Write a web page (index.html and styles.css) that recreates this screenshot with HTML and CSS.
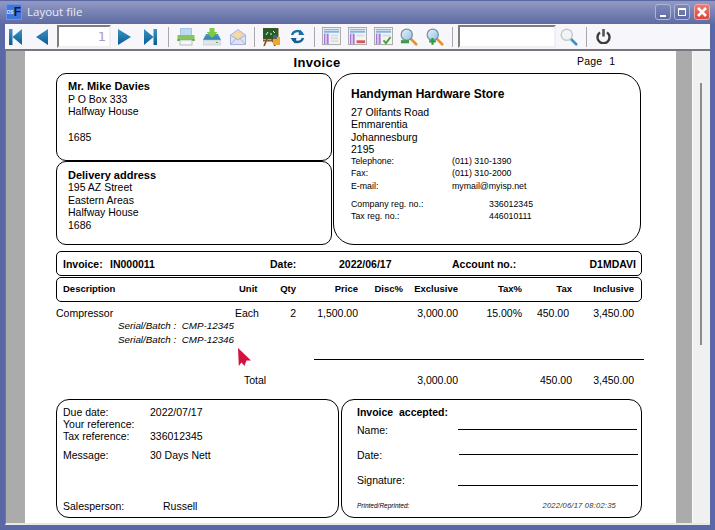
FILE: index.html
```html
<!DOCTYPE html>
<html lang="en">
<head>
<meta charset="utf-8">
<title>Layout file</title>
<link rel="stylesheet" href="styles.css">
</head>
<body>
<svg class="defs" width="0" height="0" aria-hidden="true">
  <defs>
    <linearGradient id="nav" x1="0" y1="0" x2="0" y2="1"><stop offset="0" stop-color="#3b94c6"/><stop offset="1" stop-color="#0a5c92"/></linearGradient>
    <linearGradient id="lens" x1="0" y1="0" x2="1" y2="1"><stop offset="0" stop-color="#e9f3fb"/><stop offset="1" stop-color="#8fc0e6"/></linearGradient>
    <linearGradient id="tray" x1="0" y1="0" x2="0" y2="1"><stop offset="0" stop-color="#4d9cc8"/><stop offset="1" stop-color="#1f6f9e"/></linearGradient>
    <symbol id="report" viewBox="0 0 20 20">
      <rect x="0.5" y="0.5" width="19" height="18" fill="#f3f3f3" stroke="#a9a9a9"/>
      <rect x="2" y="2" width="16" height="4" fill="#7db6e0"/>
      <rect x="2" y="3" width="16" height="1" fill="#d8e8f5"/>
      <rect x="2" y="7" width="5" height="11" fill="#a878d8"/>
      <rect x="3.5" y="7" width="1.5" height="11" fill="#e8dcf6"/>
    </symbol>
    <symbol id="lens-base" viewBox="0 0 20 20">
      <path d="M11 11 L18 18" stroke="#e8912d" stroke-width="3" stroke-linecap="round"/>
      <circle cx="7.5" cy="7.5" r="6.2" fill="url(#lens)" stroke="#7c8d9c" stroke-width="1.4"/>
    </symbol>
  </defs>
</svg>

<div class="window">
  <header class="titlebar">
    <div class="appicon"><span class="appicon-os">OS</span><span class="appicon-f">F</span></div>
    <div class="title">Layout file</div>
    <div class="winbtns">
      <div class="winbtn"><span class="glyph-min"></span></div>
      <div class="winbtn"><span class="glyph-max"></span></div>
      <div class="winbtn winbtn-close">
        <svg width="12" height="12" viewBox="0 0 12 12"><path d="M2 2 L10 10 M10 2 L2 10" stroke="#fff" stroke-width="2.6"/></svg>
      </div>
    </div>
  </header>

  <nav class="toolbar">
    <div class="tool"><svg width="14" height="16" viewBox="0 0 14 16"><rect x="0" y="0" width="3.5" height="16" fill="url(#nav)"/><path d="M13 0 V16 L3.5 8 Z" fill="url(#nav)"/></svg></div>
    <div class="tool"><svg width="12" height="16" viewBox="0 0 12 16"><path d="M12 0 V16 L0 8 Z" fill="url(#nav)"/></svg></div>
    <div class="numbox page-num">1</div>
    <div class="tool"><svg width="13" height="16" viewBox="0 0 13 16"><path d="M0 0 V16 L13 8 Z" fill="url(#nav)"/></svg></div>
    <div class="tool"><svg width="14" height="16" viewBox="0 0 14 16"><rect x="10.5" y="0" width="3.5" height="16" fill="url(#nav)"/><path d="M1 0 V16 L10.5 8 Z" fill="url(#nav)"/></svg></div>
    <div class="sep sep-a"></div>
    <div class="tool"><svg width="18" height="18" viewBox="0 0 18 18"><rect x="3.5" y="0.5" width="11" height="7" fill="#bcd9ef" stroke="#a5c6de"/><rect x="0.5" y="7" width="17" height="6" fill="#86c65a"/><rect x="0.5" y="11" width="17" height="2" fill="#5aa73a"/><rect x="3" y="12" width="12" height="5" fill="#f4f6f7" stroke="#b7bfc4"/></svg></div>
    <div class="tool"><svg width="18" height="18" viewBox="0 0 18 18"><path d="M3 6 H15 L18 12 V16 H0 V12 Z" fill="url(#tray)"/><rect x="0" y="12" width="18" height="5" fill="#dfe5e8" stroke="#b7c0c5" stroke-width="0.6"/><rect x="13" y="14" width="2" height="1" fill="#5aa73a"/><path d="M6.5 0 H11.5 V4 H14.5 L9 10 L3.5 4 H6.5 Z" fill="#7ecb3f"/></svg></div>
    <div class="tool"><svg width="16" height="16" viewBox="0 0 16 16"><path d="M0.5 6 L8 0.5 L15.5 6 V15.5 H0.5 Z" fill="#dce3f6" stroke="#a7b3dd"/><path d="M3 7 L5 3 H11 L13 7 L8 10 Z" fill="#f7d9a5" stroke="#e8c48a" stroke-width="0.6"/><path d="M0.5 15.5 L6.5 9 M15.5 15.5 L9.5 9 M0.5 6 L8 11 L15.5 6" fill="none" stroke="#a7b3dd"/></svg></div>
    <div class="sep sep-b"></div>
    <div class="tool"><svg width="17" height="18" viewBox="0 0 17 18"><rect x="0" y="0" width="15" height="11" fill="#1f5f2a" stroke="#6b4a1f" stroke-width="1"/><path d="M3 7 L5 4 M7 6 H9 M10 3 L12 5" stroke="#e8f3e0" stroke-width="1"/><path d="M4 11 L1 18 M9 11 L12 18" stroke="#7a4d18" stroke-width="1.6"/><rect x="0" y="12" width="10" height="1.5" fill="#8a5a20"/><rect x="10" y="9" width="7" height="8" fill="#f0a52c"/><rect x="10" y="7" width="4" height="4" fill="#55606a"/></svg></div>
    <div class="tool"><svg width="15" height="15" viewBox="0 0 15 15"><path d="M2 6 A5.6 5.6 0 0 1 12 4.5" fill="none" stroke="#1a6fa3" stroke-width="2.4"/><path d="M10 0.5 L14.5 6 L8.5 6 Z" fill="#1a6fa3"/><path d="M13 9 A5.6 5.6 0 0 1 3 10.5" fill="none" stroke="#155f8e" stroke-width="2.4"/><path d="M5 14.5 L0.5 9 L6.5 9 Z" fill="#155f8e"/></svg></div>
    <div class="sep"></div>
    <div class="tool"><svg class="ico19" viewBox="0 0 20 20"><use href="#report"/><rect x="9" y="8" width="8" height="2" fill="#d9dde0"/><rect x="9" y="11" width="8" height="2" fill="#d9dde0"/><rect x="9" y="14" width="8" height="2" fill="#d9dde0"/></svg></div>
    <div class="tool"><svg class="ico19" viewBox="0 0 20 20"><use href="#report"/><rect x="9" y="8" width="8" height="2" fill="#d9dde0"/><rect x="9" y="14" width="9" height="3" fill="#d8595c"/></svg></div>
    <div class="tool"><svg class="ico19" viewBox="0 0 20 20"><use href="#report"/><rect x="9" y="8" width="8" height="2" fill="#d9dde0"/><path d="M10 14 L12.5 17 L17.5 10.5" fill="none" stroke="#4f9f3a" stroke-width="2"/></svg></div>
    <div class="tool"><svg width="18" height="18" viewBox="0 0 20 20"><use href="#lens-base"/><rect x="1" y="13.5" width="9" height="3.5" fill="#3f9a4a"/></svg></div>
    <div class="tool"><svg width="18" height="18" viewBox="0 0 20 20"><use href="#lens-base"/><path d="M6 11 H8.5 V13.5 H11 V16 H8.5 V18.5 H6 V16 H3.5 V13.5 H6 Z" fill="#2f9a3f"/></svg></div>
    <div class="sep sep-a2"></div>
    <div class="numbox search-box"></div>
    <div class="tool"><svg width="18" height="18" viewBox="0 0 20 20"><path d="M11 11 L18 18" stroke="#3f8fc0" stroke-width="3" stroke-linecap="round"/><circle cx="7.5" cy="7.5" r="6.2" fill="#f1f3f5" stroke="#c4cace" stroke-width="1.6"/></svg></div>
    <div class="sep"></div>
    <div class="tool"><svg width="15" height="15" viewBox="0 0 15 15"><path d="M4 3.4 A6 6 0 1 0 11 3.4" fill="none" stroke="#3c3c3c" stroke-width="2.4"/><rect x="6.2" y="0" width="2.6" height="7.5" fill="#555"/></svg></div>
  </nav>

  <main class="viewer">
    <div class="gutter gutter-left"></div>
    <article class="page">
      <div class="doc-head">
        <h1 class="doc-title">Invoice</h1>
        <div class="doc-page"><span>Page</span><span>1</span></div>
      </div>

      <section class="top-grid">
        <div class="box box-bill">
          <div class="strong">Mr. Mike Davies</div>
          <div>P O Box 333</div>
          <div>Halfway House</div>
          <div>&nbsp;</div>
          <div>1685</div>
        </div>
        <div class="box box-store">
          <div class="store-name">Handyman Hardware Store</div>
          <div>27 Olifants Road</div>
          <div>Emmarentia</div>
          <div>Johannesburg</div>
          <div>2195</div>
          <div class="store-contact">
            <span>Telephone:</span><span>(011) 310-1390</span>
            <span>Fax:</span><span>(011) 310-2000</span>
            <span>E-mail:</span><span>mymail@myisp.net</span>
          </div>
          <div class="store-reg">
            <span>Company reg. no.:</span><span>336012345</span>
            <span>Tax reg. no.:</span><span>446010111</span>
          </div>
        </div>
        <div class="box box-delivery">
          <div class="strong">Delivery address</div>
          <div>195 AZ Street</div>
          <div>Eastern Areas</div>
          <div>Halfway House</div>
          <div>1686</div>
        </div>
      </section>

      <section class="box box-info">
        <span class="i-label">Invoice:</span><span class="i-num">IN000011</span>
        <span class="i-date">Date:</span><span class="i-dateval">2022/06/17</span>
        <span class="i-acc">Account no.:</span><span class="i-accval">D1MDAVI</span>
      </section>

      <section class="box box-cols cols">
        <span>Description</span><span class="pad-unit">Unit</span><span class="r">Qty</span><span class="r">Price</span><span class="r">Disc%</span><span class="r">Exclusive</span><span class="r">Tax%</span><span class="r">Tax</span><span class="r">Inclusive</span>
      </section>

      <section class="line-items">
        <div class="cols cols-flush">
          <span>Compressor</span><span class="pad-each">Each</span><span class="r">2</span><span class="r">1,500.00</span><span class="r"></span><span class="r">3,000.00</span><span class="r">15.00%</span><span class="r val-tax">450.00</span><span class="r">3,450.00</span>
        </div>
        <div class="serial">Serial/Batch :&nbsp; CMP-12345</div>
        <div class="serial serial-2">Serial/Batch :&nbsp; CMP-12346</div>
        <div class="total-rule"></div>
        <div class="cols cols-flush">
          <span></span><span class="pad-total">Total</span><span class="r"></span><span class="r"></span><span class="r"></span><span class="r">3,000.00</span><span class="r"></span><span class="r">450.00</span><span class="r">3,450.00</span>
        </div>
      </section>

      <section class="bottom-grid">
        <div class="box box-terms">
          <div class="terms">
            <span>Due date:</span><span>2022/07/17</span>
            <span>Your reference:</span><span></span>
            <span>Tax reference:</span><span>336012345</span>
            <span class="gap-msg">Message:</span><span class="gap-msg">30 Days Nett</span>
          </div>
          <div class="sales"><span>Salesperson:</span><span>Russell</span></div>
        </div>
        <div class="box box-accept">
          <div class="strong accept-title">Invoice&nbsp; accepted:</div>
          <div class="sign sign-name"><span>Name:</span><i class="sign-rule"></i></div>
          <div class="sign sign-date"><span>Date:</span><i class="sign-rule"></i></div>
          <div class="sign sign-sig"><span>Signature:</span><i class="sign-rule"></i></div>
          <div class="printed"><span class="printed-l">Printed/Reprinted:</span><span class="printed-r">2022/06/17 08:02:35</span></div>
        </div>
      </section>

      <svg class="cursor" width="14" height="19" viewBox="0 0 14 19"><path d="M0 0 L13 12.5 L8.5 12.5 L7.5 15 L6.5 18 L3.5 14.5 L0.8 18 Z" fill="#d4123f"/></svg>
    </article>
    <div class="gutter gutter-right"></div>
    <aside class="scroll"><div class="thumb"></div></aside>
  </main>
</div>
</body>
</html>
```
FILE: styles.css
```css
* { box-sizing: border-box; margin: 0; padding: 0; }
html, body { width: 715px; height: 530px; overflow: hidden; }
body { font-family: "Liberation Sans", Arial, sans-serif; font-size: 10.5px; color: #000; background: #5a69a5; }
.defs { position: absolute; }

.window { width: 715px; height: 530px; display: flex; flex-direction: column; padding: 0 5px 5px; background: #5a69a5; }

.titlebar { height: 24px; margin: 0 -5px; padding: 4px 5px 0 6px; display: flex; align-items: flex-start; background: linear-gradient(#8e96c1 2px, #7a84b5 10px, #5c68a1 24px); border-top: 1px solid #5a69a5; flex: none; }
.appicon { width: 16px; height: 16px; background: #3f76dc; border: 1px solid #6f93e0; display: flex; align-items: center; justify-content: flex-end; margin-top: -1px; overflow: hidden; }
.appicon-os { font-size: 5px; font-weight: bold; color: #dfe8ff; }
.appicon-f { font-size: 12px; font-weight: bold; color: #14143c; line-height: 14px; }
.title { margin-left: 5px; font-family: "Open Sans", sans-serif; font-size: 11.5px; line-height: 16px; color: #e8ebf7; margin-top: -1px; }
.winbtns { margin-left: auto; display: flex; gap: 3px; margin-top: -1px; }
.winbtn { width: 16px; height: 16px; border: 1px solid #aeb5d6; border-radius: 3px; background: linear-gradient(#7d87b8, #5f6ba6); display: flex; align-items: center; justify-content: center; position: relative; }
.winbtn:nth-child(2) { margin-right: 1px; }
.winbtn-close { background: linear-gradient(#ee7a6f, #e0443c); border-color: #f0a9a4; }
.glyph-min { width: 6px; height: 2px; background: #fff; margin-top: 8px; }
.glyph-max { width: 8px; height: 8px; border: 1.5px solid #fff; border-top-width: 2px; }

.toolbar { display: flex; align-items: center; background: #f7f7fb; border-bottom: 2px solid #77777b; flex: none; height: 27px; }
.tool { width: 26px; flex: none; display: flex; align-items: center; justify-content: center; height: 22px; }
.tool:first-child { margin-left: -2px; }
.ico19 { width: 19px; height: 19px; }
.sep { width: 1px; height: 20px; background: #a9a9ad; margin: 0 3px 0 4px; flex: none; }
.sep-a { margin: 0 4px 0 5px; }
.sep-a2 { margin: 0 5px 0 4px; }
.sep-b { margin: 0 3px; }
.numbox { height: 23px; background: #fff; border: 2px solid #f0f0f2; border-top-color: #7d7d80; border-left-color: #7d7d80; flex: none; }
.page-num { width: 54px; margin-left: 2px; text-align: right; color: #a99bd2; font-size: 13px; line-height: 19px; padding-right: 3px; font-family: "DejaVu Sans", sans-serif; }
.search-box { width: 98px; }

.viewer { flex: 1; min-height: 0; display: flex; border-bottom: 2px solid #e8e8ea; border-left: 1px solid #77777b; overflow: hidden; }
.gutter { background: #ababab; flex: none; }
.gutter-left { width: 19px; }
.gutter-right { width: 16px; }
.page { width: 651px; flex: none; background: #fff; padding-left: 31px; position: relative; overflow: hidden; }
.scroll { flex: 1; background: #f0f0f0; border-left: 1px solid #fafafa; padding: 32px 0 0 7px; }
.thumb { width: 2px; height: 262px; background: #8d8d8d; }

.doc-head { height: 22px; display: flex; }
.doc-title { width: 522px; text-align: center; font-size: 13px; font-weight: bold; letter-spacing: 0.3px; line-height: 24px; }
.doc-page { display: flex; gap: 7px; margin-left: -1px; line-height: 20px; letter-spacing: 0.2px; }

.box { border: 1px solid #000; }
.strong { font-weight: bold; font-size: 11px; }

.top-grid { display: grid; grid-template-columns: 276px 308px; grid-template-rows: 88px 84px; column-gap: 1px; }
.box-bill { padding: 6px 11px; border-radius: 10px; line-height: 12.7px; }
.box-delivery { padding: 7px 11px; border-radius: 10px; line-height: 12.4px; grid-column: 1; }
.box-store { grid-column: 2; grid-row: 1 / span 2; border-radius: 21px; padding: 13px 17px 0; line-height: 12.4px; }
.store-name { font-size: 12px; font-weight: bold; line-height: 14px; margin-bottom: 5px; }
.store-contact, .store-reg { display: grid; font-size: 8.8px; }
.store-contact { grid-template-columns: 101px 1fr; margin-top: -1px; line-height: 12.6px; }
.store-reg { grid-template-columns: 138px 1fr; margin-top: 6px; line-height: 12px; }

.box-info { margin-top: 6px; width: 586px; height: 25px; border-radius: 5px; display: flex; align-items: center; padding: 1px 0 0 6px; font-weight: bold; }
.i-label { width: 47px; }
.i-num { width: 160px; }
.i-date { width: 69px; }
.i-dateval { width: 113px; }
.i-acc { width: 100px; }
.i-accval { width: 84px; text-align: right; }

.cols { display: grid; grid-template-columns: 176px 30px 34px 62px 45px 55px 64px 50px 62px; align-items: center; white-space: nowrap; }
.box-cols { margin-top: 1px; width: 586px; height: 25px; border-radius: 5px; padding: 0 0 2px 6px; grid-template-columns: 169px 30px 34px 62px 45px 55px 64px 50px 62px; font-weight: bold; font-size: 9.5px; }
.r { text-align: right; }
.pad-unit { padding-left: 7px; }
.pad-each { padding-left: 3px; }
.pad-total { padding-left: 12px; }
.val-tax { padding-right: 3px; }

.line-items { padding-top: 5px; height: 97px; width: 590px; }
.cols-flush { height: 13px; line-height: 13px; }
.serial { padding-left: 62px; font-style: italic; font-size: 9.8px; line-height: 13px; height: 13px; margin-top: -1px; }
.serial-2 { margin-top: 1px; }
.total-rule { margin: 13px 0 14px 258px; width: 330px; border-top: 1px solid #000; }

.bottom-grid { display: grid; grid-template-columns: 283px 301px; column-gap: 2px; height: 119px; }
.box-terms, .box-accept { border-radius: 13px; height: 119px; }
.box-terms { padding: 6px 6px; }
.terms { display: grid; grid-template-columns: 87px 1fr; line-height: 12px; }
.gap-msg { margin-top: 7px; }
.sales { display: flex; margin-top: 39px; line-height: 12px; }
.sales span:first-child { width: 100px; }
.box-accept { padding: 6px 15px 0; }
.accept-title { line-height: 12px; font-size: 10.5px; }
.sign { display: flex; height: 25px; align-items: center; margin-top: -1px; }
.sign + .sign { margin-top: 0; }
.sign span { width: 101px; flex: none; }
.sign-rule { display: block; flex: none; width: 179px; border-top: 1px solid #000; }
.sign-date .sign-rule { margin-left: 1px; margin-top: -1px; }
.sign-name .sign-rule { margin-top: -1px; }
.sign-sig .sign-rule { width: 180px; margin-top: 12px; }
.printed { display: flex; justify-content: space-between; align-items: center; width: 259px; margin-top: 9px; font-style: italic; }
.printed-l { font-size: 6.5px; }
.printed-r { font-size: 7.6px; color: #333; letter-spacing: 0.2px; }
.cursor { position: absolute; left: 213px; top: 297px; }
```
